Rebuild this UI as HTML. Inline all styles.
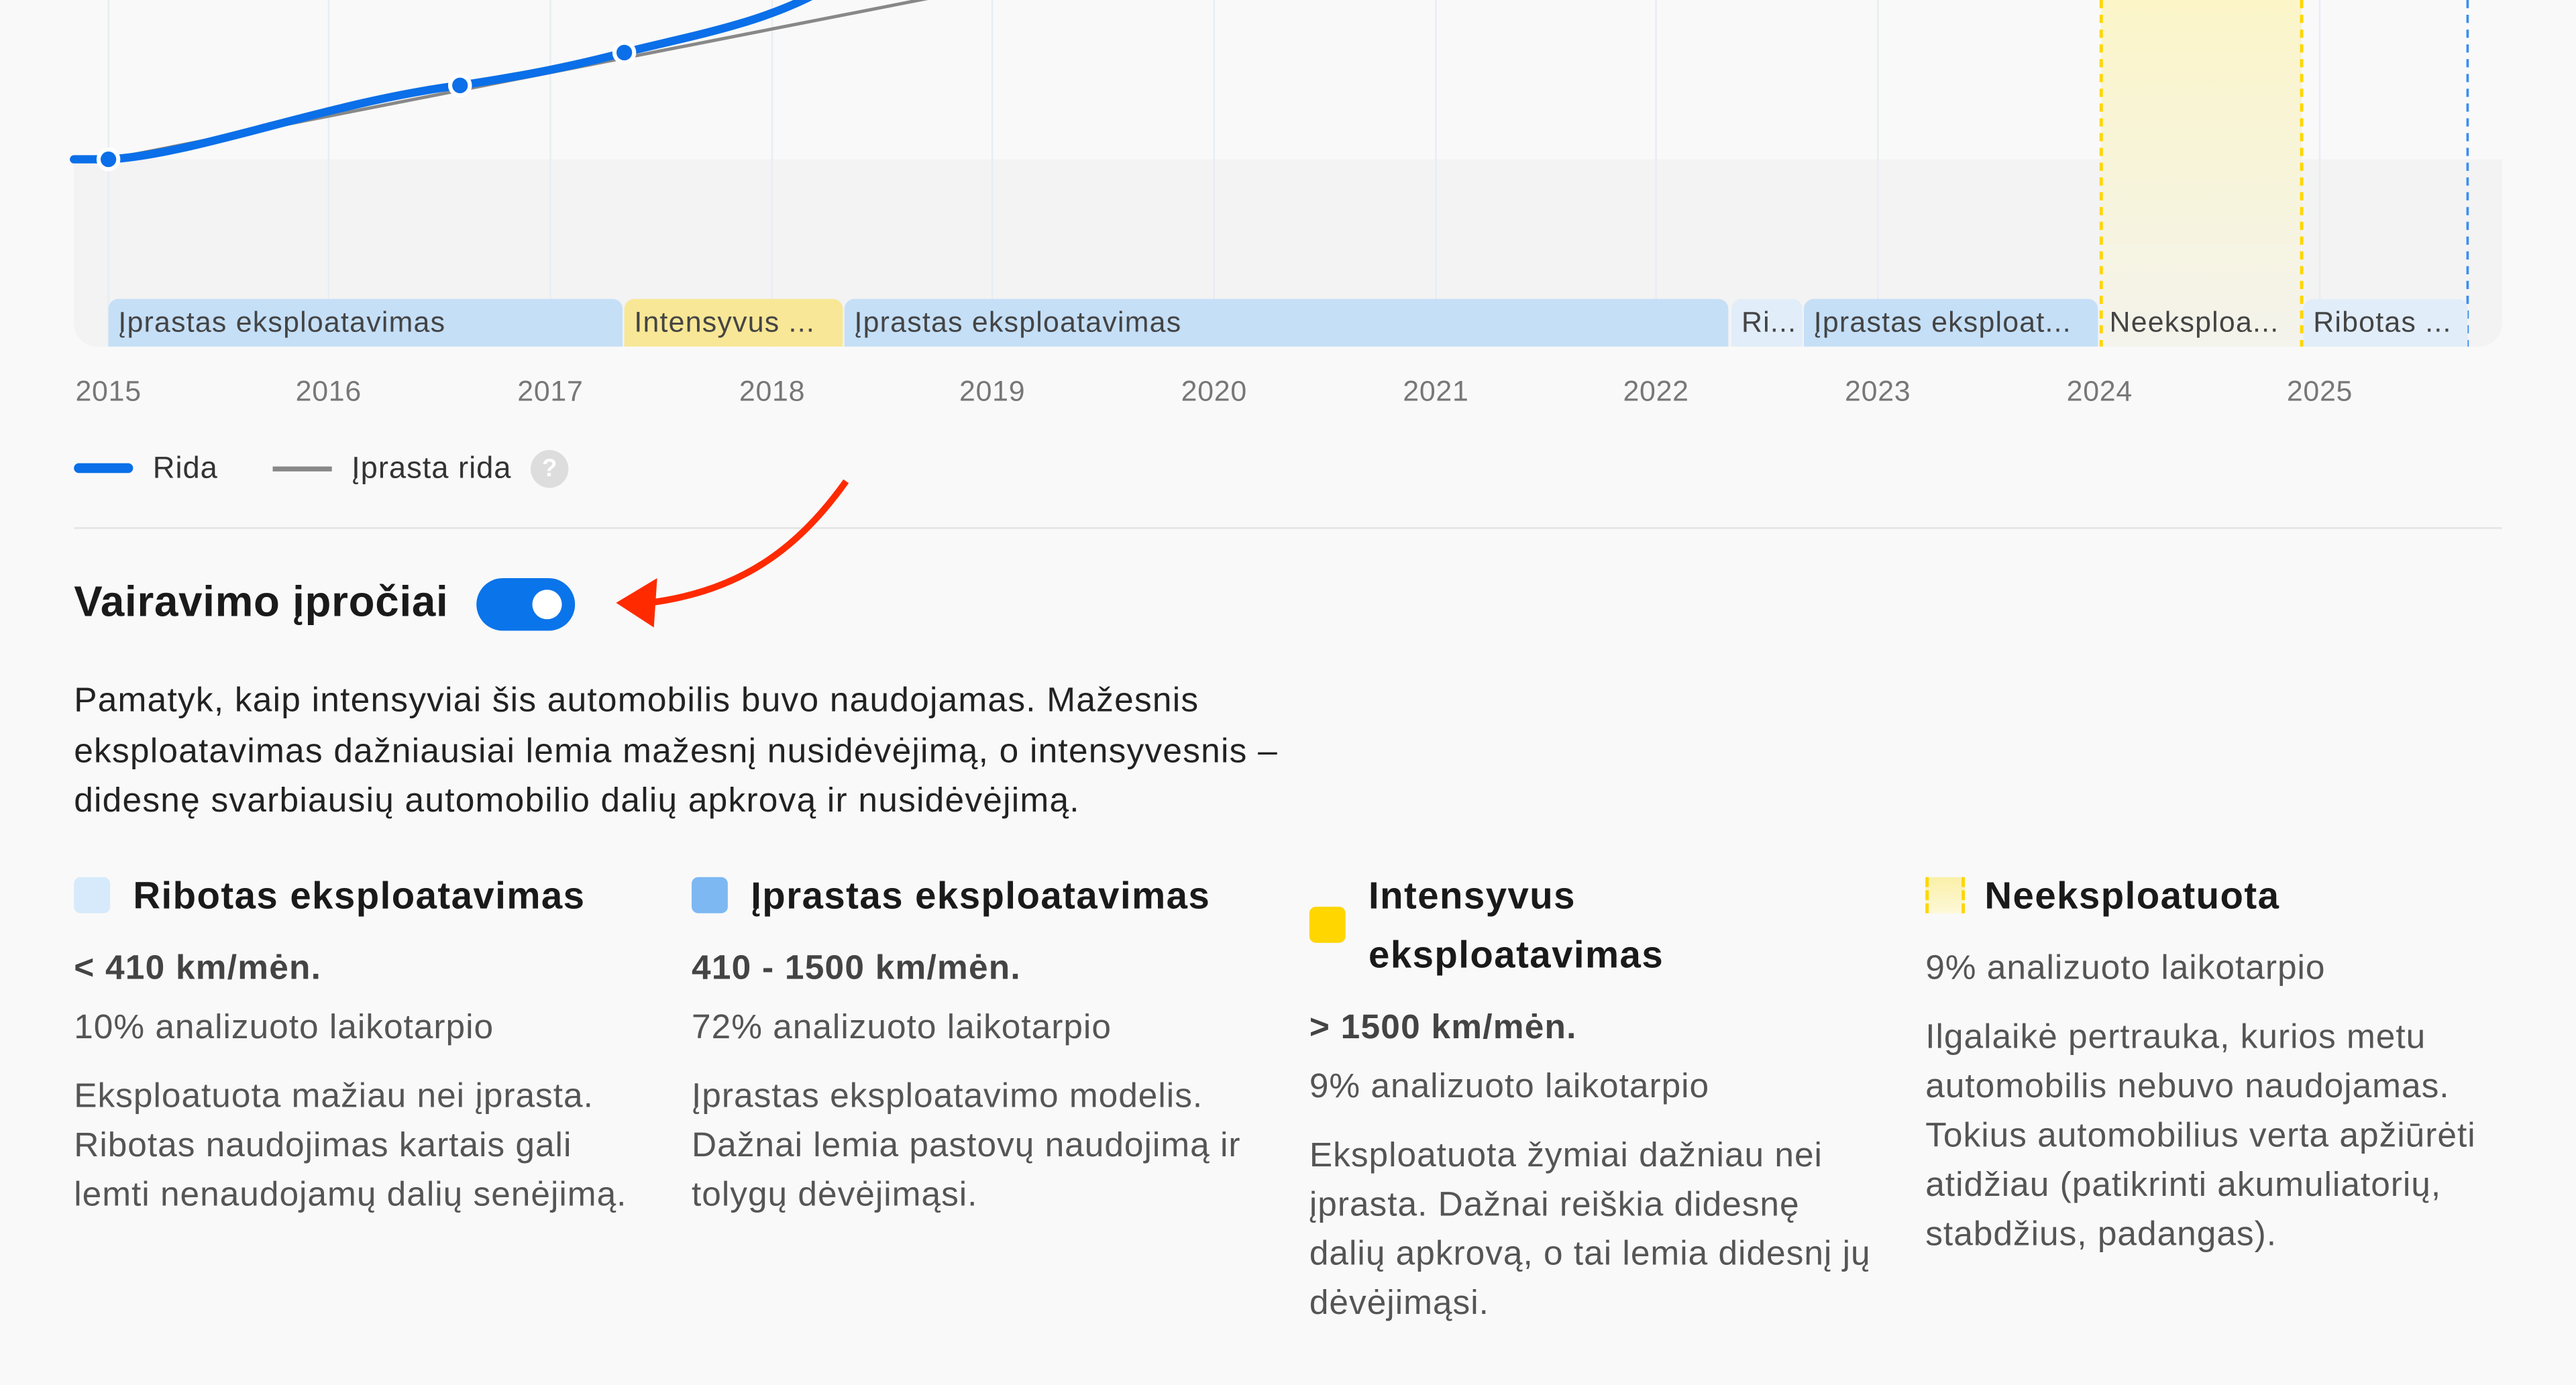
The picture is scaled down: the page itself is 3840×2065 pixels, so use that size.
<!DOCTYPE html>
<html><head><meta charset="utf-8"><style>
html,body{margin:0;padding:0;background:#f9f9f9;overflow:hidden}
body{width:3840px;height:2064px}
#s{position:absolute;left:0;top:0;width:1568px;height:843px;transform:scale(2.449);transform-origin:0 0;font-family:"Liberation Sans",sans-serif;color:#222}
.a{position:absolute;white-space:nowrap}
.band{position:absolute;top:182px;height:29px;font-size:17.5px;letter-spacing:0.5px;color:#444;line-height:29px;padding-left:6px;box-sizing:border-box;overflow:hidden;border-radius:6px 6px 0 0}
.yr{position:absolute;top:228px;font-size:17.5px;letter-spacing:0.3px;color:#777;transform:translateX(-50%)}
.col{position:absolute;top:530px;width:370px}
.sq{position:absolute;left:0;width:22px;height:22px;border-radius:4px}
.t{position:absolute;left:36px;font-size:23px;letter-spacing:0.6px;font-weight:bold;line-height:36px;color:#1a1a1a;white-space:nowrap}
.km{position:absolute;left:0;font-size:21px;letter-spacing:0.5px;font-weight:bold;color:#444;white-space:nowrap}
.pc{position:absolute;left:0;font-size:21px;letter-spacing:0.4px;color:#555;white-space:nowrap}
.d{position:absolute;left:0;font-size:21px;letter-spacing:0.4px;line-height:30px;color:#555;white-space:nowrap}
</style></head><body><div id="s">
<div class="a" style="left:45px;top:0;width:1478px;height:97px;background:#f9f9f9"></div>
<div class="a" style="left:45px;top:97px;width:1478px;height:114px;background:#f3f3f3;border-radius:0 0 14px 14px"></div>
<svg class="a" style="left:0;top:0" width="1568" height="215">
<g stroke="#e8edf3" stroke-width="1">
<line x1="66" y1="0" x2="66" y2="211"/><line x1="200" y1="0" x2="200" y2="211"/><line x1="335" y1="0" x2="335" y2="211"/><line x1="470" y1="0" x2="470" y2="211"/><line x1="604" y1="0" x2="604" y2="211"/><line x1="739" y1="0" x2="739" y2="211"/><line x1="874" y1="0" x2="874" y2="211"/><line x1="1008" y1="0" x2="1008" y2="211"/><line x1="1143" y1="0" x2="1143" y2="211"/><line x1="1412" y1="0" x2="1412" y2="211"/>
</g>
<defs><linearGradient id="yg" x1="0" y1="0" x2="0" y2="1"><stop offset="0" stop-color="#fbf5c8"/><stop offset="1" stop-color="#f4f3ec"/></linearGradient></defs>
<rect x="1279" y="0" width="122" height="211" fill="url(#yg)"/>
<line x1="1279" y1="0" x2="1279" y2="211" stroke="#ffd600" stroke-width="2" stroke-dasharray="5,4"/>
<line x1="1401" y1="0" x2="1401" y2="211" stroke="#ffd600" stroke-width="2" stroke-dasharray="5,4"/>
<line x1="1502" y1="0" x2="1502" y2="211" stroke="#3b8ef0" stroke-width="1.5" stroke-dasharray="5,4"/>
<path d="M66 97 L570 -2" stroke="#888" stroke-width="2" fill="none"/>
<path d="M45 97 L66 97 C120 94 200 62 280 52 C320 46 350 40 380 32 C420 22 460 15 495 -3" stroke="#0a6fe8" stroke-width="5" fill="none" stroke-linecap="round"/>
<g fill="#0a6fe8" stroke="#fff" stroke-width="2.5"><circle cx="66" cy="97" r="6"/><circle cx="280" cy="52" r="6"/><circle cx="380" cy="32" r="6"/></g>
</svg>
<div class="band" style="left:66px;width:313px;background:#c5dff7">Įprastas eksploatavimas</div>
<div class="band" style="left:380px;width:133px;background:#f8e796">Intensyvus ...</div>
<div class="band" style="left:514px;width:538px;background:#c5dff7">Įprastas eksploatavimas</div>
<div class="band" style="left:1054px;width:43px;background:#e1edf9">Ri...</div>
<div class="band" style="left:1098px;width:179px;background:#c5dff7">Įprastas eksploat...</div>
<div class="band" style="left:1278px;width:122px;background:transparent">Neeksploa...</div>
<div class="band" style="left:1402px;width:100px;background:#e1edf9">Ribotas ...</div>
<div class="yr" style="left:66px">2015</div><div class="yr" style="left:200px">2016</div><div class="yr" style="left:335px">2017</div><div class="yr" style="left:470px">2018</div><div class="yr" style="left:604px">2019</div><div class="yr" style="left:739px">2020</div><div class="yr" style="left:874px">2021</div><div class="yr" style="left:1008px">2022</div><div class="yr" style="left:1143px">2023</div><div class="yr" style="left:1278px">2024</div><div class="yr" style="left:1412px">2025</div>
<div class="a" style="left:45px;top:282px;width:36px;height:6px;border-radius:3px;background:#0a6fe8"></div>
<div class="a" style="left:93px;top:274px;font-size:18.5px;letter-spacing:0.4px;color:#333">Rida</div>
<div class="a" style="left:166px;top:284px;width:36px;height:3px;background:#888"></div>
<div class="a" style="left:214px;top:274px;font-size:18.5px;letter-spacing:0.4px;color:#333">Įprasta rida</div>
<div class="a" style="left:323px;top:274px;width:23px;height:23px;border-radius:50%;background:#ddd;color:#fff;font-size:15px;text-align:center;line-height:23px;font-weight:bold">?</div>
<div class="a" style="left:45px;top:321px;width:1478px;height:1px;background:#e3e3e3"></div>
<div class="a" style="left:45px;top:351px;font-size:26px;letter-spacing:0.3px;font-weight:bold;color:#1a1a1a">Vairavimo įpročiai</div>
<div class="a" style="left:290px;top:352px;width:60px;height:32px;border-radius:16px;background:#0a74ea"></div>
<div class="a" style="left:324px;top:359px;width:18px;height:18px;border-radius:50%;background:#fff"></div>
<svg class="a" style="left:0;top:280px" width="600" height="120">
<path d="M515 13 C485 55 450 80 395 87" stroke="#ff2a00" stroke-width="4" fill="none"/>
<path d="M375 87 L400 72 L398 102 Z" fill="#ff2a00"/>
</svg>
<div class="a" style="left:45px;top:412px;font-size:21px;letter-spacing:0.5px;line-height:30.5px;color:#222">Pamatyk, kaip intensyviai šis automobilis buvo naudojamas. Mažesnis<br>eksploatavimas dažniausiai lemia mažesnį nusidėvėjimą, o intensyvesnis –<br>didesnę svarbiausių automobilio dalių apkrovą ir nusidėvėjimą.</div>

<div class="col" style="left:45px">
<div class="sq" style="top:4px;background:#d6eafb"></div>
<div class="t" style="top:-3px">Ribotas eksploatavimas</div>
<div class="km" style="top:48px">&lt; 410 km/mėn.</div>
<div class="pc" style="top:84px">10% analizuoto laikotarpio</div>
<div class="d" style="top:123px">Eksploatuota mažiau nei įprasta.<br>Ribotas naudojimas kartais gali<br>lemti nenaudojamų dalių senėjimą.</div>
</div>
<div class="col" style="left:421px">
<div class="sq" style="top:4px;background:#7db8f3"></div>
<div class="t" style="top:-3px">Įprastas eksploatavimas</div>
<div class="km" style="top:48px">410 - 1500 km/mėn.</div>
<div class="pc" style="top:84px">72% analizuoto laikotarpio</div>
<div class="d" style="top:123px">Įprastas eksploatavimo modelis.<br>Dažnai lemia pastovų naudojimą ir<br>tolygų dėvėjimąsi.</div>
</div>
<div class="col" style="left:797px">
<div class="sq" style="top:22px;background:#ffd600"></div>
<div class="t" style="top:-3px">Intensyvus<br>eksploatavimas</div>
<div class="km" style="top:84px">&gt; 1500 km/mėn.</div>
<div class="pc" style="top:120px">9% analizuoto laikotarpio</div>
<div class="d" style="top:159px">Eksploatuota žymiai dažniau nei<br>įprasta. Dažnai reiškia didesnę<br>dalių apkrovą, o tai lemia didesnį jų<br>dėvėjimąsi.</div>
</div>
<div class="col" style="left:1172px">
<div class="sq" style="top:4px;background:linear-gradient(#fbf0a8,#fdf8d8);border-left:2px dashed #ffd600;border-right:2px dashed #ffd600;border-radius:0;box-sizing:border-box;width:24px"></div>
<div class="t" style="top:-3px">Neeksploatuota</div>
<div class="pc" style="top:48px">9% analizuoto laikotarpio</div>
<div class="d" style="top:87px">Ilgalaikė pertrauka, kurios metu<br>automobilis nebuvo naudojamas.<br>Tokius automobilius verta apžiūrėti<br>atidžiau (patikrinti akumuliatorių,<br>stabdžius, padangas).</div>
</div>
</div></body></html>
